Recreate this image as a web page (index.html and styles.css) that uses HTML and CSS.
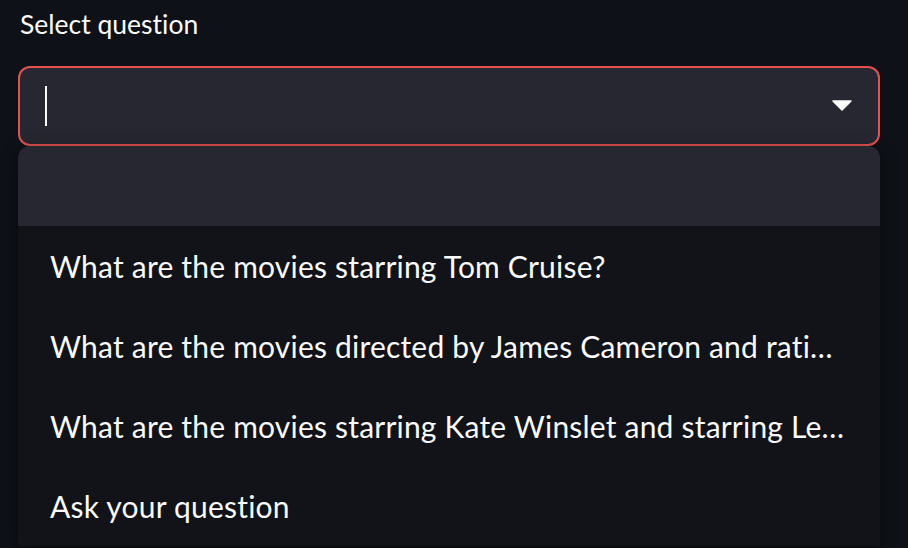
FILE: index.html
```html
<!DOCTYPE html>
<html>
<head>
<meta charset="utf-8">
<link rel="stylesheet" href="styles.css">
</head>
<body>
<div class="widget">
  <label class="label">Select question</label>
  <div class="select">
    <span class="caret"></span>
    <svg class="arrow" width="20" height="12" viewBox="0 0 20 12"><path d="M1 1 L19 1 L10 10 Z" fill="#fafafa" stroke="#fafafa" stroke-width="1.5" stroke-linejoin="round"/></svg>
  </div>
  <ul class="menu">
    <li class="option active"></li>
    <li class="option"><span class="txt">What are the movies starring Tom Cruise?</span></li>
    <li class="option"><span class="txt">What are the movies directed by James Cameron and rati…</span></li>
    <li class="option"><span class="txt">What are the movies starring Kate Winslet and starring Le…</span></li>
    <li class="option"><span class="txt">Ask your question</span></li>
  </ul>
</div>
</body>
</html>
```
FILE: styles.css
```css
html, body {
  margin: 0;
  padding: 0;
  background: #0e1117;
  width: 908px;
  height: 548px;
  overflow: hidden;
}
body {
  font-family: "Lato", "Noto Sans", sans-serif;
  font-variant-ligatures: none;
  font-feature-settings: "liga" 0, "clig" 0;
  color: #fafafa;
}
.widget {
  padding: 0 28px 0 18px;
}
.label {
  display: block;
  font-size: 26.5px;
  line-height: 36px;
  padding: 6px 0 0 2px;
  height: 66px;
  box-sizing: border-box;
}
.select {
  height: 80px;
  box-sizing: border-box;
  border: 2px solid #e5524d;
  border-radius: 12px;
  background: #262730;
  display: flex;
  align-items: center;
  justify-content: space-between;
  padding: 0 26px 0 25px;
}
.caret {
  width: 2px;
  height: 40px;
  background: #fafafa;
}
.arrow {
  display: block;
}
.menu {
  list-style: none;
  margin: 0;
  padding: 0;
  background: #111319;
  border-radius: 12px 12px 0 0;
  box-shadow: 0 4px 16px rgba(0,0,0,0.5);
  overflow: hidden;
}
.option {
  height: 80px;
  display: flex;
  align-items: center;
  padding: 0 32px;
  font-size: 30px;
}
.option.active {
  background: #262730;
}
.txt {
  white-space: nowrap;
  letter-spacing: 0.2px;
}
```
